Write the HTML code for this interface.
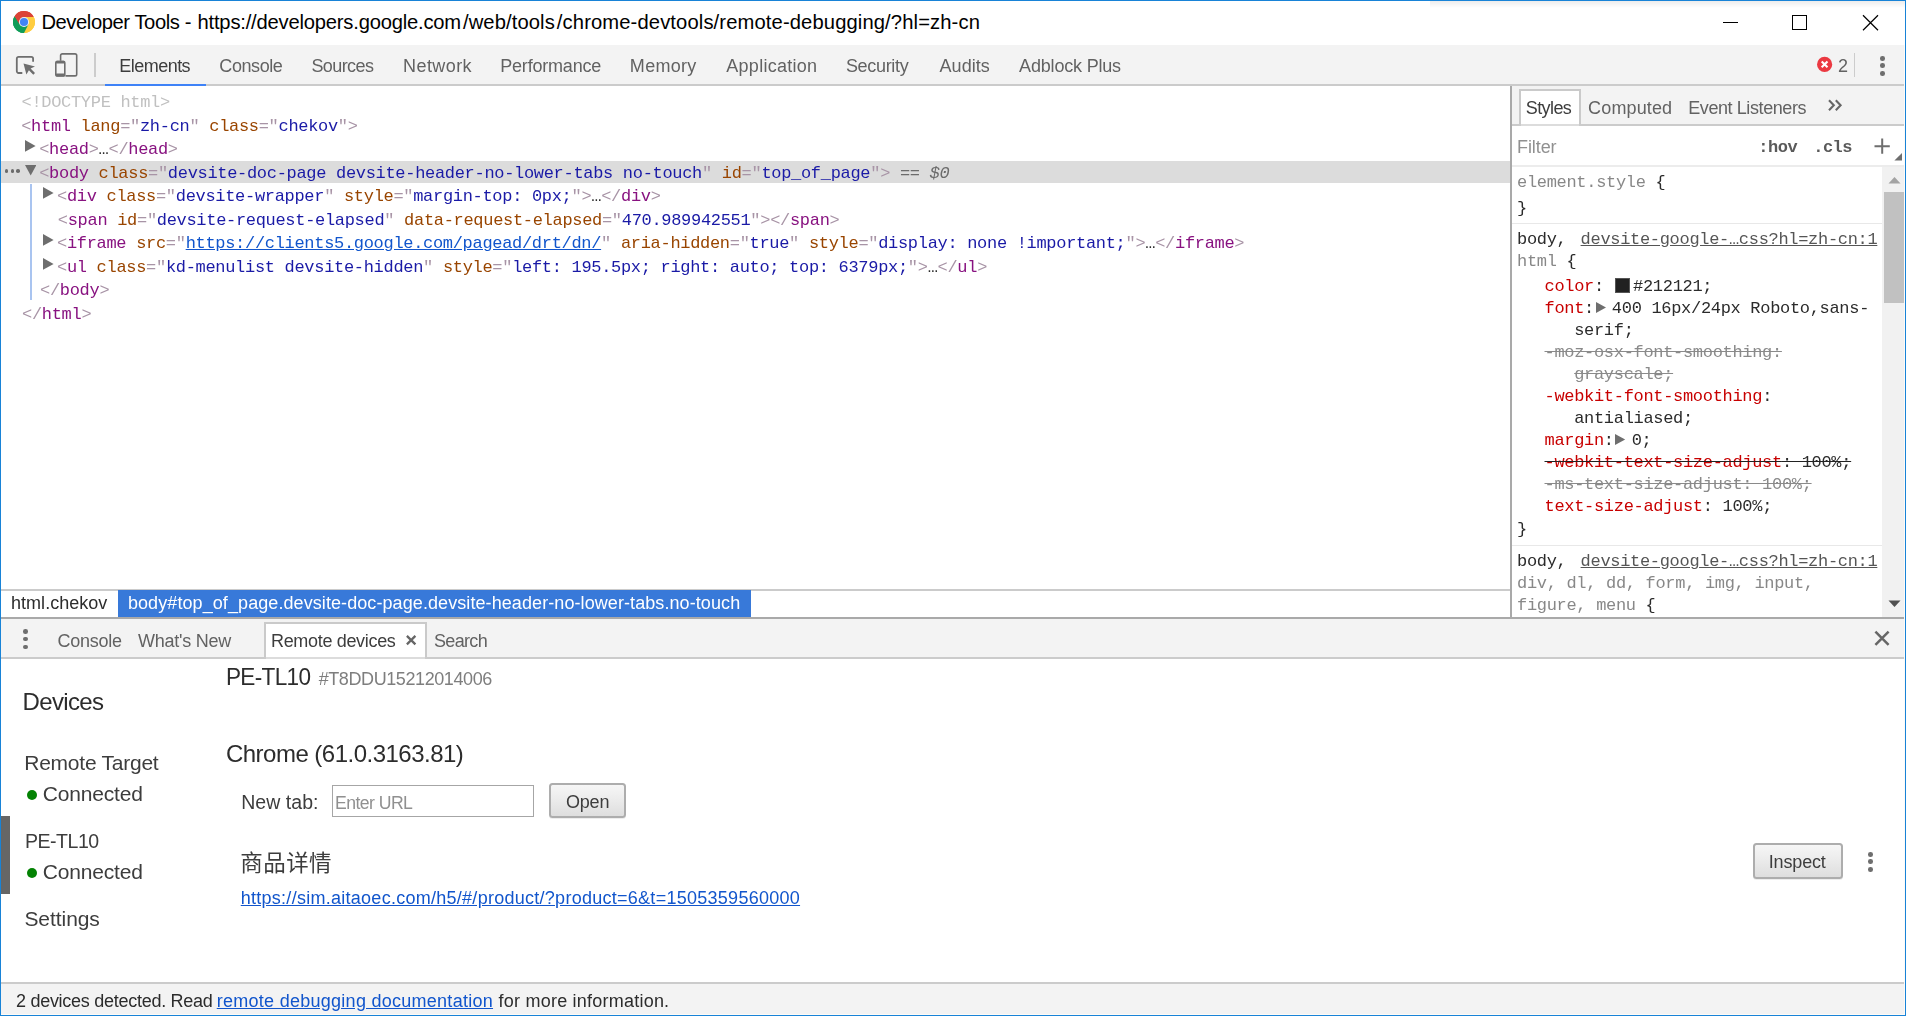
<!DOCTYPE html><html lang="en"><head><meta charset="utf-8"><title>Developer Tools</title><style>

*{box-sizing:border-box;margin:0;padding:0}
html,body{width:1906px;height:1016px;overflow:hidden;background:#fff}
body{position:relative;font-family:"Liberation Sans","Noto Sans CJK SC",sans-serif;color:#333;-webkit-font-smoothing:antialiased}
#tb{position:absolute;left:1px;top:1px;width:1000px;height:43px;background:#fff}
#dev{position:absolute;left:0;top:0;width:1906px;height:1016px;will-change:transform}
.a{position:absolute}
.t{position:absolute;white-space:pre;line-height:1;display:block}
.m{position:absolute;white-space:pre;line-height:20px;height:20px;font:17px/20px "Liberation Mono","DejaVu Sans Mono",monospace;letter-spacing:-0.31px;color:#2b2b2b;display:block}
.tg{color:#a894a6}.tn{color:#881280}.an{color:#994500}.av{color:#1a1aa6}.dt{color:#c0c0c0}
.lk{color:#1155cc;text-decoration:underline}
.hint{color:#6b6b6b;font-style:italic}
.sel{color:#888}.pn{color:#c80000}.src{color:#555;text-decoration:underline}
.dis{color:#8a8a8a;text-decoration:line-through}
.ovr{text-decoration:line-through;text-decoration-color:#222}
.sw{display:inline-block;width:15px;height:15px;background:#212121;border:1px solid #555;vertical-align:-2px;margin:0 3.5px 0 0.8px}
.ex{display:inline-block;width:10.2px;height:11px;margin:0 6px 0 1.7px;vertical-align:-0.5px}
.btn{position:absolute;border:2px solid #adadad;border-radius:3.5px;background:linear-gradient(#f6f6f6,#ededed 40%,#dedede);box-shadow:0 1px 0 rgba(0,0,0,.07)}
.dot{position:absolute;width:5px;height:5px;border-radius:50%;background:#6e6e6e}

</style></head><body>
<div id="dev">
<div class="a" style="left:1430px;top:1px;width:475px;height:7px;background:linear-gradient(rgba(0,0,0,.07),rgba(0,0,0,0));"></div>
<div class="a" style="left:1px;top:45px;width:1904px;height:39px;background:#f3f3f3;"></div>
<div class="a" style="left:1px;top:84px;width:1904px;height:2px;background:#cbcbcb;"></div>
<div class="a" style="left:105px;top:84px;width:101px;height:2px;background:#3e82f7;"></div>
<div class="a" style="left:94px;top:53px;width:2px;height:24px;background:#ccc;"></div>
<div class="a" style="left:1854px;top:53px;width:1px;height:24px;background:#ccc;"></div>
<div class="a" style="left:1510px;top:86px;width:2px;height:531px;background:#a9a9a9;"></div>
<div class="a" style="left:1512px;top:86px;width:393px;height:38px;background:#f3f3f3;"></div>
<div class="a" style="left:1512px;top:124px;width:393px;height:2px;background:#cbcbcb;"></div>
<div class="a" style="left:1519px;top:89px;width:62px;height:35px;background:#fff;border:2px solid #cacaca;border-bottom:none;"></div>
<div class="a" style="left:1521px;top:124px;width:58px;height:2px;background:#dcdcdc;"></div>
<div class="a" style="left:1512px;top:126px;width:393px;height:39px;background:#fff;"></div>
<div class="a" style="left:1512px;top:165px;width:393px;height:2px;background:#ececec;"></div>
<div class="a" style="left:1882px;top:167px;width:23px;height:450px;background:#f1f1f1;"></div>
<div class="a" style="left:1884px;top:192px;width:21px;height:111px;background:#c1c1c1;"></div>
<div class="a" style="left:1512px;top:222.5px;width:370px;height:1.5px;background:#e8e8e8;"></div>
<div class="a" style="left:1512px;top:544.5px;width:370px;height:1.5px;background:#e8e8e8;"></div>
<div class="a" style="left:1px;top:161px;width:1509px;height:22px;background:#dcdcdc;"></div>
<div class="a" style="left:30px;top:184px;width:1.6px;height:116px;background:#a9c4f0;"></div>
<div class="a" style="left:1px;top:589px;width:1509px;height:2px;background:#cbcbcb;"></div>
<div class="a" style="left:118px;top:590px;width:633px;height:27px;background:#3879d9;"></div>
<div class="a" style="left:1px;top:617px;width:1904px;height:2px;background:#a9a9a9;"></div>
<div class="a" style="left:1px;top:619px;width:1904px;height:38px;background:#f3f3f3;"></div>
<div class="a" style="left:1px;top:657px;width:1904px;height:2px;background:#cbcbcb;"></div>
<div class="a" style="left:264px;top:622.4px;width:163px;height:34.6px;background:#fff;border:2px solid #cacaca;border-bottom:none;"></div>
<div class="a" style="left:266px;top:657px;width:159px;height:2px;background:#dcdcdc;"></div>
<div class="a" style="left:1px;top:816px;width:9px;height:77.6px;background:#666;"></div>
<div class="a" style="left:26.8px;top:789.8px;width:10.5px;height:10.5px;background:#038203;border-radius:50%;"></div>
<div class="a" style="left:26.8px;top:867.9px;width:10.5px;height:10.5px;background:#038203;border-radius:50%;"></div>
<div class="a" style="left:332px;top:785px;width:202px;height:32.3px;background:#fff;border:1.3px solid #a6a6a6;"></div>
<div class="btn" style="left:549px;top:783.4px;width:76.8px;height:34.8px"></div>
<div class="btn" style="left:1753.3px;top:843px;width:89.4px;height:35.8px"></div>
<div class="a" style="left:1px;top:984px;width:1904px;height:31px;background:#f3f3f3;"></div>
<div class="a" style="left:1px;top:982px;width:1904px;height:2px;background:#cbcbcb;"></div>
<div class="dot" style="left:23.4px;top:629.3px;width:4.6px;height:4.6px"></div>
<div class="dot" style="left:23.4px;top:636.9px;width:4.6px;height:4.6px"></div>
<div class="dot" style="left:23.4px;top:644.5px;width:4.6px;height:4.6px"></div>
<div class="dot" style="left:1880.35px;top:55.85px;width:4.7px;height:4.7px"></div>
<div class="dot" style="left:1880.35px;top:63.35px;width:4.7px;height:4.7px"></div>
<div class="dot" style="left:1880.35px;top:71.05px;width:4.7px;height:4.7px"></div>
<div class="dot" style="left:1868.35px;top:851.95px;width:4.7px;height:4.7px"></div>
<div class="dot" style="left:1868.35px;top:859.35px;width:4.7px;height:4.7px"></div>
<div class="dot" style="left:1868.35px;top:866.95px;width:4.7px;height:4.7px"></div>
<svg class="a" style="left:25.2px;top:140.1px" width="10.6" height="11.8" viewBox="0 0 10.6 11.8"><path d="M0 0 L10.6 5.9 L0 11.8 Z" fill="#6e6e6e"/></svg>
<svg class="a" style="left:24.5px;top:165.3px" width="11.4" height="10.4" viewBox="0 0 11.4 10.4"><path d="M0 0 L11.4 0 L5.7 10.4 Z" fill="#6e6e6e"/></svg>
<svg class="a" style="left:43.2px;top:187.3px" width="10.6" height="11.8" viewBox="0 0 10.6 11.8"><path d="M0 0 L10.6 5.9 L0 11.8 Z" fill="#6e6e6e"/></svg>
<svg class="a" style="left:43.2px;top:234.3px" width="10.6" height="11.8" viewBox="0 0 10.6 11.8"><path d="M0 0 L10.6 5.9 L0 11.8 Z" fill="#6e6e6e"/></svg>
<svg class="a" style="left:43.2px;top:257.8px" width="10.6" height="11.8" viewBox="0 0 10.6 11.8"><path d="M0 0 L10.6 5.9 L0 11.8 Z" fill="#6e6e6e"/></svg>
<div class="dot" style="left:4.8px;top:169.3px;width:3.6px;height:3.6px;background:#6b6b6b"></div>
<div class="dot" style="left:10.6px;top:169.3px;width:3.6px;height:3.6px;background:#6b6b6b"></div>
<div class="dot" style="left:16.4px;top:169.3px;width:3.6px;height:3.6px;background:#6b6b6b"></div>
<div class="a" style="left:1904px;top:45px;width:1px;height:970px;background:#fdfbf8;"></div>
<div class="a" style="left:1px;top:1014px;width:1904px;height:1px;background:#fdfbf8;"></div>
<div class="a" style="left:0px;top:0px;width:1906px;height:1px;background:#1883d7;"></div>
<div class="a" style="left:0px;top:1015px;width:1906px;height:1px;background:#1883d7;"></div>
<div class="a" style="left:0px;top:0px;width:1px;height:1016px;background:#1883d7;"></div>
<div class="a" style="left:1905px;top:0px;width:1px;height:1016px;background:#1883d7;"></div>


<svg class="a" style="left:14px;top:52px" width="26" height="26" viewBox="0 0 26 26" fill="none" stroke="#6e6e6e">
 <path d="M8.3 21 H4.6 A1.8 1.8 0 0 1 2.8 19.1 V6.7 A1.8 1.8 0 0 1 4.6 4.9 H17.3 A1.8 1.8 0 0 1 19.1 6.7 V9.8" stroke-width="1.8"/>
 <path d="M9.5 11.6 L21 14.5 L16.6 16.6 L21 21 L19.3 22.7 L14.9 18.3 L12.4 22.6 Z" fill="#6e6e6e" stroke="none"/>
</svg>
<svg class="a" style="left:54px;top:52px" width="26" height="26" viewBox="0 0 26 26" fill="none" stroke="#6e6e6e">
 <path d="M6.6 8.8 V3.6 A1.7 1.7 0 0 1 8.3 1.9 H21 A1.7 1.7 0 0 1 22.7 3.6 V22.2 A1.7 1.7 0 0 1 21 23.9 H11.5" stroke-width="1.6"/>
 <rect x="1.8" y="9.6" width="9" height="14.3" rx="1.2" stroke-width="1.6" fill="#f3f3f3"/>
 <rect x="1.8" y="8.8" width="9" height="2.6" rx="1" fill="#6e6e6e" stroke="none"/>
 <rect x="1.8" y="21.6" width="9" height="3" rx="1" fill="#6e6e6e" stroke="none"/>
</svg>
<svg class="a" style="left:1715px;top:8px" width="180" height="30" viewBox="0 0 180 30" fill="none" stroke="#000" stroke-width="1.1" shape-rendering="crispEdges">
 <path d="M8 14.5 H23"/>
 <rect x="77.5" y="7.5" width="14" height="14"/>
</svg>
<svg class="a" style="left:1855px;top:8px" width="30" height="30" viewBox="0 0 30 30" fill="none" stroke="#000" stroke-width="1.2">
 <path d="M8 7.3 L23 22.2 M23 7.3 L8 22.2"/>
</svg>
<svg class="a" style="left:1816px;top:56px" width="17" height="17" viewBox="0 0 17 17">
 <circle cx="8.6" cy="8.4" r="7.6" fill="#eb3941"/>
 <path d="M5.7 5.5 L11.5 11.3 M11.5 5.5 L5.7 11.3" stroke="#fff" stroke-width="2.1"/>
</svg>
<svg class="a" style="left:1826px;top:96px" width="18" height="18" viewBox="0 0 18 18" fill="none" stroke="#666" stroke-width="2.1">
 <path d="M3 4.2 L7.8 9.2 L3 14.2 M9.8 4.2 L14.6 9.2 L9.8 14.2"/>
</svg>
<svg class="a" style="left:1872px;top:136px" width="30" height="26" viewBox="0 0 30 26" fill="none" stroke="#6e6e6e" stroke-width="2">
 <path d="M2.5 10.2 H17.8 M10.2 2.6 V17.8"/>
 <path d="M30 17 V24.6 H22.4 Z" fill="#6e6e6e" stroke="none"/>
</svg>
<svg class="a" style="left:1872px;top:628px" width="20" height="20" viewBox="0 0 20 20" fill="none" stroke="#666" stroke-width="2.5">
 <path d="M3.4 3.6 L16.6 16.8 M16.6 3.6 L3.4 16.8"/>
</svg>
<svg class="a" style="left:404px;top:633px" width="14" height="14" viewBox="0 0 14 14" fill="none" stroke="#666" stroke-width="2.3">
 <path d="M2.9 2.9 L11.4 11.4 M11.4 2.9 L2.9 11.4"/>
</svg>
<svg class="a" style="left:1884px;top:170px" width="21" height="446" viewBox="0 0 21 446">
 <path d="M4.5 13.5 L10.5 7 L16.5 13.5 Z" fill="#a3a3a3"/>
 <path d="M4.5 430.5 L10.5 437 L16.5 430.5 Z" fill="#505050"/>
</svg>

<div class="t" id="tab0" style="left:119.21px;top:57.00px;font-size:18px;color:#3d3d3d;letter-spacing:-0.516px;">Elements</div>
<div class="t" id="tab1" style="left:219.32px;top:57.00px;font-size:18px;color:#626262;letter-spacing:-0.416px;">Console</div>
<div class="t" id="tab2" style="left:311.42px;top:57.00px;font-size:18px;color:#626262;letter-spacing:-0.593px;">Sources</div>
<div class="t" id="tab3" style="left:403.05px;top:57.00px;font-size:18px;color:#626262;letter-spacing:0.426px;">Network</div>
<div class="t" id="tab4" style="left:500.26px;top:57.00px;font-size:18px;color:#626262;letter-spacing:-0.205px;">Performance</div>
<div class="t" id="tab5" style="left:629.84px;top:57.00px;font-size:18px;color:#626262;letter-spacing:0.303px;">Memory</div>
<div class="t" id="tab6" style="left:726.32px;top:57.00px;font-size:18px;color:#626262;letter-spacing:0.272px;">Application</div>
<div class="t" id="tab7" style="left:845.95px;top:57.00px;font-size:18px;color:#626262;letter-spacing:-0.331px;">Security</div>
<div class="t" id="tab8" style="left:939.48px;top:57.00px;font-size:18px;color:#626262;letter-spacing:0.073px;">Audits</div>
<div class="t" id="tab9" style="left:1019.11px;top:57.00px;font-size:18px;color:#626262;letter-spacing:-0.186px;">Adblock Plus</div>
<div class="t" id="errcnt" style="left:1838.11px;top:56.70px;font-size:18px;color:#626262;letter-spacing:0.084px;">2</div>
<div class="t" id="st0" style="left:1525.79px;top:98.90px;font-size:18px;color:#3d3d3d;letter-spacing:-0.597px;">Styles</div>
<div class="t" id="st1" style="left:1588.11px;top:98.90px;font-size:18px;color:#626262;letter-spacing:0.128px;">Computed</div>
<div class="t" id="st2" style="left:1688.21px;top:98.90px;font-size:18px;color:#626262;letter-spacing:-0.410px;">Event Listeners</div>
<div class="t" id="filter" style="left:1517.00px;top:137.80px;font-size:18px;color:#909090;letter-spacing:-0.092px;">Filter</div>
<div class="t" id="bc0" style="left:11.00px;top:593.50px;font-size:18px;color:#2c2c2c;letter-spacing:0.031px;">html.chekov</div>
<div class="t" id="bc1" style="left:127.95px;top:593.50px;font-size:18px;color:#fff;letter-spacing:0.083px;">body#top_of_page.devsite-doc-page.devsite-header-no-lower-tabs.no-touch</div>
<div class="t" id="dt0" style="left:57.58px;top:631.80px;font-size:18px;color:#626262;letter-spacing:-0.283px;">Console</div>
<div class="t" id="dt1" style="left:137.90px;top:631.80px;font-size:18px;color:#626262;letter-spacing:-0.235px;">What's New</div>
<div class="t" id="dt2" style="left:271.00px;top:631.80px;font-size:18px;color:#3d3d3d;letter-spacing:-0.326px;">Remote devices</div>
<div class="t" id="dt3" style="left:433.95px;top:631.80px;font-size:18px;color:#626262;letter-spacing:-0.664px;">Search</div>
<div class="t" id="sb0" style="left:22.52px;top:690.00px;font-size:24px;color:#2c2c2c;letter-spacing:-0.652px;">Devices</div>
<div class="t" id="sb1" style="left:24.26px;top:751.90px;font-size:21px;color:#3d3d3d;letter-spacing:-0.243px;">Remote Target</div>
<div class="t" id="sb2" style="left:42.74px;top:782.80px;font-size:21px;color:#3d3d3d;letter-spacing:-0.170px;">Connected</div>
<div class="t" id="sb3" style="left:25.00px;top:829.80px;font-size:21px;color:#3d3d3d;letter-spacing:-0.520px;transform:scaleX(0.93);transform-origin:0 0;">PE-TL10</div>
<div class="t" id="sb4" style="left:42.74px;top:860.90px;font-size:21px;color:#3d3d3d;letter-spacing:-0.170px;">Connected</div>
<div class="t" id="sb5" style="left:24.42px;top:908.00px;font-size:21px;color:#3d3d3d;letter-spacing:-0.059px;">Settings</div>
<div class="t" id="dv0" style="left:226.00px;top:664.90px;font-size:24px;color:#2c2c2c;letter-spacing:-0.724px;transform:scaleX(0.94);transform-origin:0 0;">PE-TL10</div>
<div class="t" id="dv1" style="left:318.69px;top:669.90px;font-size:18px;color:#7e7e7e;letter-spacing:-0.411px;">#T8DDU15212014006</div>
<div class="t" id="dv2" style="left:225.95px;top:742.00px;font-size:24px;color:#2c2c2c;letter-spacing:-0.513px;">Chrome (61.0.3163.81)</div>
<div class="t" id="dv3" style="left:241.21px;top:792.50px;font-size:19.5px;color:#3d3d3d;letter-spacing:0.053px;">New tab:</div>
<div class="t" id="dv4" style="left:335.05px;top:792.50px;font-size:19.2px;color:#909090;letter-spacing:-0.616px;transform:scaleX(0.92);transform-origin:0 0;">Enter URL</div>
<div class="t" id="dv5" style="left:565.95px;top:792.80px;font-size:18px;color:#3d3d3d;letter-spacing:-0.182px;">Open</div>
<div class="t" id="dv6" style="left:240.25px;top:852.60px;font-size:22.5px;color:#3d3d3d;letter-spacing:0.453px;">商品详情</div>
<div class="t" id="dv7" style="left:240.74px;top:888.60px;font-size:18px;color:#1155cc;letter-spacing:0.269px;text-decoration:underline;">https://sim.aitaoec.com/h5/#/product/?product=6&amp;t=1505359560000</div>
<div class="t" id="dv8" style="left:1768.68px;top:853.00px;font-size:18px;color:#3d3d3d;letter-spacing:-0.140px;">Inspect</div>
<div class="t" id="sbar0" style="left:15.95px;top:991.80px;font-size:18px;color:#2c2c2c;letter-spacing:-0.272px;">2 devices detected. Read </div>
<div class="t" id="sbar1" style="left:216.74px;top:991.80px;font-size:18px;color:#1155cc;letter-spacing:0.270px;text-decoration:underline;">remote debugging documentation</div>
<div class="t" id="sbar2" style="left:493.37px;top:991.80px;font-size:18px;color:#2c2c2c;letter-spacing:0.224px;"> for more information.</div>
<div class="m" id="c0" style="left:21.50px;top:93.00px"><span class="dt">&lt;!DOCTYPE html&gt;</span></div>
<div class="m" id="c1" style="left:21.20px;top:116.50px"><span class="tg">&lt;<span class="tn">html</span></span> <span class="tg"><span class="an">lang</span>=&quot;<span class="av">zh-cn</span>&quot;</span> <span class="tg"><span class="an">class</span>=&quot;<span class="av">chekov</span>&quot;</span><span class="tg">&gt;</span></div>
<div class="m" id="c2" style="left:39.20px;top:140.00px"><span class="tg">&lt;<span class="tn">head</span></span><span class="tg">&gt;</span>…<span class="tg">&lt;/<span class="tn">head</span>&gt;</span></div>
<div class="m" id="c3" style="left:39.20px;top:163.50px"><span class="tg">&lt;<span class="tn">body</span></span> <span class="tg"><span class="an">class</span>=&quot;<span class="av">devsite-doc-page devsite-header-no-lower-tabs no-touch</span>&quot;</span> <span class="tg"><span class="an">id</span>=&quot;<span class="av">top_of_page</span>&quot;</span><span class="tg">&gt;</span><span class="hint"> == $0</span></div>
<div class="m" id="c4" style="left:57.00px;top:187.00px"><span class="tg">&lt;<span class="tn">div</span></span> <span class="tg"><span class="an">class</span>=&quot;<span class="av">devsite-wrapper</span>&quot;</span> <span class="tg"><span class="an">style</span>=&quot;<span class="av">margin-top: 0px;</span>&quot;</span><span class="tg">&gt;</span>…<span class="tg">&lt;/<span class="tn">div</span>&gt;</span></div>
<div class="m" id="c5" style="left:57.80px;top:210.50px"><span class="tg">&lt;<span class="tn">span</span></span> <span class="tg"><span class="an">id</span>=&quot;<span class="av">devsite-request-elapsed</span>&quot;</span> <span class="tg"><span class="an">data-request-elapsed</span>=&quot;<span class="av">470.989942551</span>&quot;</span><span class="tg">&gt;</span><span class="tg">&lt;/<span class="tn">span</span>&gt;</span></div>
<div class="m" id="c6" style="left:57.00px;top:234.00px"><span class="tg">&lt;<span class="tn">iframe</span></span> <span class="tg"><span class="an">src</span>=&quot;<span class="lk">https://clients5.google.com/pagead/drt/dn/</span>&quot;</span> <span class="tg"><span class="an">aria-hidden</span>=&quot;<span class="av">true</span>&quot;</span> <span class="tg"><span class="an">style</span>=&quot;<span class="av">display: none !important;</span>&quot;</span><span class="tg">&gt;</span>…<span class="tg">&lt;/<span class="tn">iframe</span>&gt;</span></div>
<div class="m" id="c7" style="left:57.00px;top:257.50px"><span class="tg">&lt;<span class="tn">ul</span></span> <span class="tg"><span class="an">class</span>=&quot;<span class="av">kd-menulist devsite-hidden</span>&quot;</span> <span class="tg"><span class="an">style</span>=&quot;<span class="av">left: 195.5px; right: auto; top: 6379px;</span>&quot;</span><span class="tg">&gt;</span>…<span class="tg">&lt;/<span class="tn">ul</span>&gt;</span></div>
<div class="m" id="c8" style="left:40.00px;top:281.00px"><span class="tg">&lt;/<span class="tn">body</span>&gt;</span></div>
<div class="m" id="c9" style="left:22.00px;top:304.50px"><span class="tg">&lt;/<span class="tn">html</span>&gt;</span></div>
<div class="m" id="s0" style="left:1517.00px;top:173.00px"><span class="sel">element.style</span> {</div>
<div class="m" id="s1" style="left:1517.00px;top:199.00px">}</div>
<div class="m" id="s2" style="left:1517.00px;top:229.90px">body,</div>
<div class="m" id="s3" style="left:1580.60px;top:229.90px"><span class="src">devsite-google-…css?hl=zh-cn:1</span></div>
<div class="m" id="s4" style="left:1517.00px;top:251.70px"><span class="sel">html</span> {</div>
<div class="m" id="s5" style="left:1544.50px;top:276.60px"><span class="pn">color</span>: <span class="sw"></span>#212121;</div>
<div class="m" id="s6" style="left:1544.50px;top:298.70px"><span class="pn">font</span>:<svg class="ex" viewBox="0 0 10.2 11"><path d="M0 0 L10.2 5.5 L0 11 Z" fill="#6e6e6e"/></svg>400 16px/24px Roboto,sans-</div>
<div class="m" id="s7" style="left:1574.20px;top:320.60px">serif;</div>
<div class="m" id="s8" style="left:1544.50px;top:342.60px"><span class="dis">-moz-osx-font-smoothing:</span></div>
<div class="m" id="s9" style="left:1574.20px;top:364.60px"><span class="dis">grayscale;</span></div>
<div class="m" id="s10" style="left:1544.50px;top:386.60px"><span class="pn">-webkit-font-smoothing</span>:</div>
<div class="m" id="s11" style="left:1574.20px;top:408.60px">antialiased;</div>
<div class="m" id="s12" style="left:1544.50px;top:430.60px"><span class="pn">margin</span>:<svg class="ex" viewBox="0 0 10.2 11"><path d="M0 0 L10.2 5.5 L0 11 Z" fill="#6e6e6e"/></svg>0;</div>
<div class="m" id="s13" style="left:1544.50px;top:452.60px"><span class="ovr"><span class="pn">-webkit-text-size-adjust</span>: 100%;</span></div>
<div class="m" id="s14" style="left:1544.50px;top:474.60px"><span class="dis">-ms-text-size-adjust: 100%;</span></div>
<div class="m" id="s15" style="left:1544.50px;top:497.00px"><span class="pn">text-size-adjust</span>: 100%;</div>
<div class="m" id="s16" style="left:1517.00px;top:519.50px">}</div>
<div class="m" id="s17" style="left:1517.00px;top:552.30px">body,</div>
<div class="m" id="s18" style="left:1580.60px;top:552.30px"><span class="src">devsite-google-…css?hl=zh-cn:1</span></div>
<div class="m" id="s19" style="left:1517.00px;top:574.20px"><span class="sel">div, dl, dd, form, img, input,</span></div>
<div class="m" id="s20" style="left:1517.00px;top:596.10px"><span class="sel">figure, menu</span> {</div>
<div class="m" id="hov" style="left:1758.3px;letter-spacing:-0.5px;top:138.30px;font-weight:bold;color:#5a5a5a">:hov</div>
<div class="m" id="cls" style="left:1813.2px;letter-spacing:-0.5px;top:138.30px;font-weight:bold;color:#5a5a5a">.cls</div>
</div>
<div id="tb"><svg class="a" style="left:12px;top:10px" width="22" height="22" viewBox="0 0 48 48">
 <circle cx="24" cy="24" r="24" fill="#fff"/>
 <path d="M24 24 L3.2 12 A24 24 0 0 1 44.8 12 Z" fill="#db4437"/>
 <path d="M24 24 L44.8 12 A24 24 0 0 1 24 48 Z" fill="#ffcd40"/>
 <path d="M24 24 L24 48 A24 24 0 0 1 3.2 12 Z" fill="#0f9d58"/>
 <path d="M24 13 L45.3 13 A24 24 0 0 0 3.2 12 L13.5 29.5 Z" fill="#db4437"/>
 <path d="M33.5 29.5 L24 48 A24 24 0 0 0 45.3 13 L24 13 Z" fill="#ffcd40"/>
 <path d="M14.5 29.5 L3.2 12 A24 24 0 0 0 24 48 L33.5 29.5 Z" fill="#0f9d58"/>
 <circle cx="24" cy="24" r="11" fill="#f1f1f1"/>
 <circle cx="24" cy="24" r="8.9" fill="#4285f4"/>
</svg><div class="t" id="title" style="left:40.42px;top:11.20px;font-size:20.2px;color:#000;letter-spacing:-0.423px;">Developer Tools - </div><div class="t" id="title2" style="left:196.53px;top:11.20px;font-size:20.2px;color:#000;letter-spacing:-0.202px;">https://developers.google.com</div><div class="t" id="title3" style="left:461.97px;top:11.20px;font-size:20.2px;color:#000;letter-spacing:0.097px;">/web/tools</div><div class="t" id="title4" style="left:555.86px;top:11.20px;font-size:20.2px;color:#000;letter-spacing:0.120px;">/chrome-devtools/remote-debugging/?hl=zh-cn</div></div>
</body></html>
